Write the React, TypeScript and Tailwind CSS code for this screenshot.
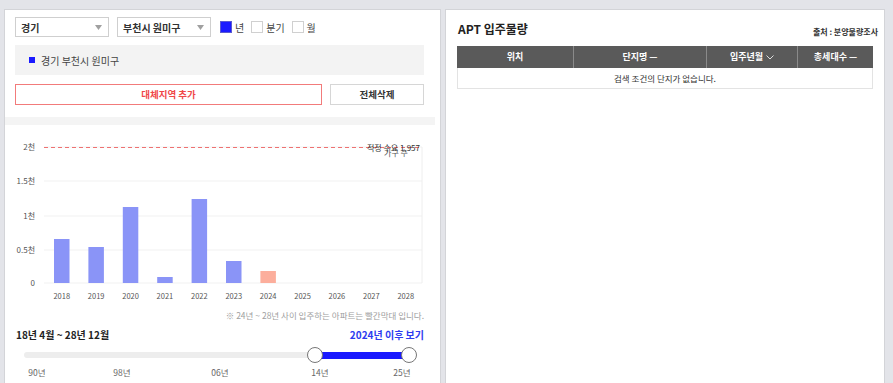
import React from "react";

const bars = [
  { year: "2018", top: 240, red: false },
  { year: "2019", top: 248, red: false },
  { year: "2020", top: 208, red: false },
  { year: "2021", top: 278, red: false },
  { year: "2022", top: 200, red: false },
  { year: "2023", top: 262, red: false },
  { year: "2024", top: 272, red: true },
  { year: "2025", top: 284, red: false },
  { year: "2026", top: 284, red: false },
  { year: "2027", top: 284, red: false },
  { year: "2028", top: 284, red: false },
];

const yTicks = [
  { label: "2천", y: 148 },
  { label: "1.5천", y: 182 },
  { label: "1천", y: 217 },
  { label: "0.5천", y: 251 },
  { label: "0", y: 284 },
];

const sliderLabels = [
  { label: "90년", x: 13 },
  { label: "98년", x: 98 },
  { label: "06년", x: 196 },
  { label: "14년", x: 296 },
  { label: "25년", x: 378 },
];

const Arrow = () => (
  <svg width="7" height="5" viewBox="0 0 7 5">
    <path d="M0 0 L7 0 L3.5 5 Z" fill="#a0a0a0" />
  </svg>
);

const Select = ({ value }: { value: string }) => (
  <div className="w-[94px] h-[20px] border border-[#cfcfcf] bg-white flex items-center justify-between pl-[5px] pr-[6px]">
    <span className="text-[10px] font-bold text-[#333]">{value}</span>
    <Arrow />
  </div>
);

const Check = ({ label, checked }: { label: string; checked?: boolean }) => (
  <div className="flex items-center gap-[3px]">
    <span
      className={
        checked
          ? "w-[12px] h-[12px] bg-[#1a1aff] border border-[#5a5ad0]"
          : "w-[12px] h-[12px] bg-white border border-[#d0d0d0]"
      }
    />
    <span className="text-[10px] text-[#444]">{label}</span>
  </div>
);

const Chart = () => (
  <svg width="436" height="180" viewBox="5 126 436 180" className="block">
    {yTicks.map((t) => (
      <g key={t.label}>
        <line x1="44" x2="422" y1={t.y} y2={t.y} stroke="#f1f1f1" strokeWidth="1" />
        <text x="35" y={t.y + 3} textAnchor="end" fontSize="8" fill="#555">
          {t.label}
        </text>
      </g>
    ))}
    <line x1="422" x2="422" y1="148" y2="284" stroke="#eeeeee" strokeWidth="1" />
    {bars.map((b, i) => {
      const x = 54 + i * 34.4;
      return (
        <g key={b.year}>
          {b.top < 284 && (
            <rect
              x={x}
              y={b.top}
              width="15.5"
              height={284 - b.top}
              fill={b.red ? "#fcae9c" : "#8a94f7"}
            />
          )}
          <text x={x + 7.75} y="300" textAnchor="middle" fontSize="7.5" fill="#555">
            {b.year}
          </text>
        </g>
      );
    })}
    <line
      x1="44"
      x2="422"
      y1="148.5"
      y2="148.5"
      stroke="#ee7272"
      strokeWidth="1"
      strokeDasharray="4 3"
      shapeRendering="crispEdges"
    />
    <text x="396" y="157" textAnchor="middle" fontSize="8" fill="#555">
      가구 수
    </text>
    <text x="420" y="152" textAnchor="end" fontSize="8" fill="#333">
      적정 수요 1,957
    </text>
  </svg>
);

const App = () => {
  return (
    <div className="w-[893px] h-[383px] overflow-hidden bg-[#e3e4e9] flex items-start pt-[9px] pl-[4px] gap-[4px] font-['Noto_Sans_CJK_KR',sans-serif]">
      <div className="w-[437px] h-[390px] bg-white border border-[#d3d4d8] flex flex-col">
        <div className="pl-[10px] pt-[7px] w-[419px]">
          <div className="flex items-center">
            <Select value="경기" />
            <div className="ml-[8px]">
              <Select value="부천시 원미구" />
            </div>
            <div className="ml-[9px] flex items-center gap-[7px]">
              <Check label="년" checked />
              <Check label="분기" />
              <Check label="월" />
            </div>
          </div>
          <div className="mt-[8px] h-[30px] bg-[#f3f3f3] flex items-center pl-[14px] gap-[6px]">
            <span className="w-[6px] h-[6px] bg-[#1a1aff]" />
            <span className="text-[10px] text-[#444]">경기 부천시 원미구</span>
          </div>
          <div className="mt-[9px] flex gap-[8px]">
            <div className="w-[307px] h-[21px] border border-[#f27b7b] flex items-center justify-center text-[9.5px] font-bold text-[#f04848]">
              대체지역 추가
            </div>
            <div className="w-[94px] h-[21px] border border-[#d6d6d6] flex items-center justify-center text-[9.5px] font-bold text-[#333]">
              전체삭제
            </div>
          </div>
        </div>
        <div className="mt-[12px] h-[8px] w-[430px] bg-[#f4f4f4]" />
        <Chart />
        <div className="h-[20px] pr-[16px] flex items-center justify-end text-[8.5px] text-[#a0a0a0]">
          ※ 24년 ~ 28년 사이 입주하는 아파트는 빨간막대 입니다.
        </div>
        <div className="h-[18px] pl-[11px] pr-[16px] flex items-center justify-between">
          <span className="text-[10px] font-bold text-[#222]">18년 4월 ~ 28년 12월</span>
          <span className="text-[10px] font-bold text-[#2d3cf0]">2024년 이후 보기</span>
        </div>
        <div className="ml-[19px] w-[385px] relative h-[24px]">
          <div className="absolute left-0 right-0 top-[9px] h-[6px] rounded-full bg-[#ededed]" />
          <div className="absolute left-[291px] w-[94px] top-[8.5px] h-[7px] bg-[#1a1aff]" />
          <div className="absolute left-[283px] top-[4px] w-[16px] h-[16px] rounded-full bg-white border-[1.5px] border-[#777]" />
          <div className="absolute left-[377px] top-[4px] w-[16px] h-[16px] rounded-full bg-white border-[1.5px] border-[#777]" />
        </div>
        <div className="ml-[19px] w-[385px] relative h-[10px]">
          {sliderLabels.map((l) => (
            <span
              key={l.label}
              className="absolute top-0 -translate-x-1/2 whitespace-nowrap text-[8.5px] leading-[10px] text-[#666]"
              style={{ left: l.x }}
            >
              {l.label}
            </span>
          ))}
        </div>
      </div>
      <div className="w-[440px] h-[390px] bg-white border border-[#d3d4d8] pl-[11px] pr-[10px]">
        <div className="h-[36px] flex items-start justify-between">
          <span className="mt-[11px] pl-[1px] text-[12px] font-bold text-[#222] leading-[16px]">APT 입주물량</span>
          <span className="mt-[17px] text-[8px] font-bold text-[#333] leading-[10px] mr-[-4px]">출처 : 분양물량조사</span>
        </div>
        <div className="w-[416px]">
          <div className="flex h-[22px] bg-[#5a5a5a] text-white text-[9px] font-bold">
            <div className="w-[117px] flex items-center justify-center border-r border-[#8a8a8a]">위치</div>
            <div className="w-[133px] flex items-center justify-center border-r border-[#8a8a8a]">단지명 —</div>
            <div className="w-[91px] flex items-center justify-center border-r border-[#8a8a8a] gap-[3px]">
              입주년월
              <svg width="8" height="5" viewBox="0 0 8 5">
                <path d="M0.5 0.5 L4 4 L7.5 0.5" fill="none" stroke="#ddd" strokeWidth="1" />
              </svg>
            </div>
            <div className="w-[75px] flex items-center justify-center">총세대수 —</div>
          </div>
          <div className="h-[21px] border border-t-0 border-[#e3e3e3] flex items-center justify-center text-[8.5px] text-[#333]">
            검색 조건의 단지가 없습니다.
          </div>
        </div>
      </div>
    </div>
  );
};

export default App;
